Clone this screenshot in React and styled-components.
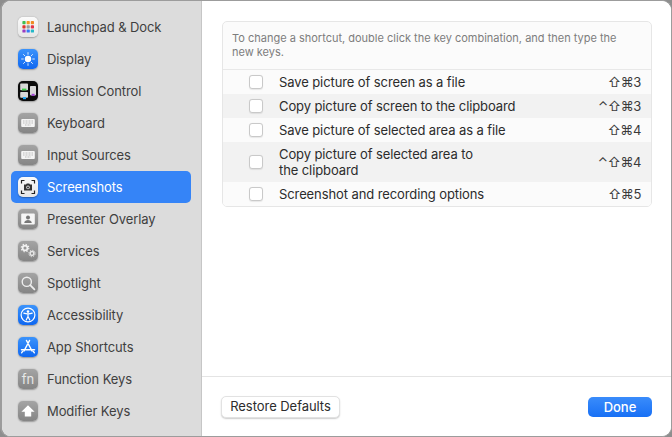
import React from "react";
import styled, { createGlobalStyle } from "styled-components";

const GlobalStyle = createGlobalStyle`
  html, body { margin: 0; padding: 0; background: #8e8e8e; }
  body { font-family: "Inter", "Liberation Sans", sans-serif; -webkit-font-smoothing: antialiased; }
  * { box-sizing: border-box; }
`;

const Grid = () => (
  <svg viewBox="0 0 20 20" width="20" height="20">
    {[
      ["#3fbf52", "#f59a23", "#f08a24"],
      ["#e0352f", "#9a9a9a", "#e2344a"],
      ["#9a3cc0", "#3478f6", "#22b8c8"],
    ].map((row, y) =>
      row.map((fill, x) => (
        <rect key={`${x}-${y}`} x={4.4 + x * 4.2} y={4 + y * 4.2} width="3.2" height="3.2" rx="0.7" fill={fill} />
      ))
    )}
  </svg>
);

const Sun = () => (
  <svg viewBox="0 0 20 20" width="20" height="20">
    <circle cx="10" cy="10" r="3.2" fill="#fff" />
    <g stroke="#fff" strokeWidth="1" strokeLinecap="round" opacity="0.85">
      <path d="M10 3.6v1.7M10 14.7v1.7M3.6 10h1.7M14.7 10h1.7M5.5 5.5l1.2 1.2M13.3 13.3l1.2 1.2M5.5 14.5l1.2-1.2M13.3 6.7l1.2-1.2" />
    </g>
  </svg>
);

const Mission = () => (
  <svg viewBox="0 0 20 20" width="20" height="20">
    <rect x="2.2" y="2.6" width="7.8" height="6.6" rx="0.8" fill="#d8d8d8" />
    <rect x="4" y="7.6" width="4.4" height="1.8" fill="#3ed14a" />
    <rect x="12" y="5" width="6" height="9.4" rx="0.8" fill="#d8d8d8" />
    <rect x="13.6" y="12.8" width="3" height="2" fill="#a545d8" />
    <rect x="2.2" y="11" width="7.8" height="5.8" rx="0.8" fill="#d8d8d8" />
    <rect x="5" y="16" width="3" height="2.2" fill="#25a7f5" />
  </svg>
);

const Keys = () => (
  <svg viewBox="0 0 20 20" width="20" height="20">
    <rect x="3.2" y="6" width="13.6" height="8" rx="1" fill="#f4f4f4" />
    <path d="M5 8h10M5 10h10M7 12h6" stroke="#b5b5b5" strokeWidth="0.9" strokeDasharray="1 0.5" />
  </svg>
);

const Capture = () => (
  <svg viewBox="0 0 20 20" width="20" height="20">
    <path d="M3.5 6.5v-3h3M13.5 3.5h3v3M16.5 13.5v3h-3M6.5 16.5h-3v-3" fill="none" stroke="#222" strokeWidth="1.2" />
    <path d="M6 7.5h2l.8-1h2.4l.8 1h2v6H6z" fill="#333" />
    <circle cx="10" cy="10.4" r="1.8" fill="#ddd" />
    <circle cx="10" cy="10.4" r="1" fill="#333" />
  </svg>
);

const Presenter = () => (
  <svg viewBox="0 0 20 20" width="20" height="20">
    <rect x="3.2" y="4.5" width="13.6" height="11" rx="1" fill="#f6f6f6" />
    <circle cx="10" cy="8.6" r="2" fill="#777" />
    <path d="M6.2 14c.4-2.2 2-3 3.8-3s3.4.8 3.8 3z" fill="#777" />
  </svg>
);

const Gears = () => (
  <svg viewBox="0 0 20 20" width="20" height="20">
    <circle cx="7" cy="7" r="2.4" fill="none" stroke="#f2f2f2" strokeWidth="1.7" />
    <circle cx="7" cy="7" r="3.8" fill="none" stroke="#f2f2f2" strokeWidth="1.1" strokeDasharray="1.4 1.6" />
    <circle cx="14" cy="12.5" r="1.9" fill="none" stroke="#e6e6e6" strokeWidth="1.5" />
    <circle cx="14" cy="12.5" r="3.2" fill="none" stroke="#e6e6e6" strokeWidth="1" strokeDasharray="1.2 1.3" />
  </svg>
);

const Magnifier = () => (
  <svg viewBox="0 0 20 20" width="20" height="20">
    <circle cx="8.8" cy="8.8" r="4.6" fill="none" stroke="#eee" strokeWidth="1.4" />
    <path d="M12.2 12.2l4.2 4.2" stroke="#eee" strokeWidth="1.8" strokeLinecap="round" />
  </svg>
);

const Person = () => (
  <svg viewBox="0 0 20 20" width="20" height="20">
    <circle cx="10" cy="10" r="6.9" fill="none" stroke="#fff" strokeWidth="1.2" />
    <circle cx="10" cy="6.6" r="1.3" fill="#fff" />
    <path d="M5.8 8.2c2.8.8 5.6.8 8.4 0M10 9v2.8M10 11.5l-1.8 3.6M10 11.5l1.8 3.6" fill="none" stroke="#fff" strokeWidth="1.2" strokeLinecap="round" />
  </svg>
);

const Store = () => (
  <svg viewBox="0 0 20 20" width="20" height="20">
    <path d="M11.5 3.5L6 14M8.5 3.5L14 14M3.5 12.8h13" fill="none" stroke="#fff" strokeWidth="1.5" strokeLinecap="round" />
    <path d="M3.6 15.8l1-1.4M16.4 15.8l-1-1.4" stroke="#fff" strokeWidth="1.4" strokeLinecap="round" />
  </svg>
);

const ShiftArrow = () => (
  <svg viewBox="0 0 20 20" width="20" height="20">
    <path d="M10 4.2l6.6 6.6h-3.4v4.6H6.8v-4.6H3.4z" fill="#fff" />
  </svg>
);

const sidebarItems = [
  { label: "Launchpad & Dock", tone: "white", icon: <Grid /> },
  { label: "Display", tone: "blue", icon: <Sun /> },
  { label: "Mission Control", tone: "black", icon: <Mission /> },
  { label: "Keyboard", tone: "gray", icon: <Keys /> },
  { label: "Input Sources", tone: "gray", icon: <Keys /> },
  { label: "Screenshots", tone: "white", icon: <Capture />, active: true },
  { label: "Presenter Overlay", tone: "gray", icon: <Presenter /> },
  { label: "Services", tone: "gray", icon: <Gears /> },
  { label: "Spotlight", tone: "gray", icon: <Magnifier /> },
  { label: "Accessibility", tone: "blue", icon: <Person /> },
  { label: "App Shortcuts", tone: "blue", icon: <Store /> },
  { label: "Function Keys", tone: "gray", icon: <FnLabel>fn</FnLabel> },
  { label: "Modifier Keys", tone: "gray", icon: <ShiftArrow /> },
];

const rows = [
  { label: "Save picture of screen as a file", keys: "⇧⌘3" },
  { label: "Copy picture of screen to the clipboard", keys: "⌃⇧⌘3" },
  { label: "Save picture of selected area as a file", keys: "⇧⌘4" },
  { label: "Copy picture of selected area to the clipboard", keys: "⌃⇧⌘4", tall: true },
  { label: "Screenshot and recording options", keys: "⇧⌘5" },
];

export default function App() {
  return (
    <>
      <GlobalStyle />
      <Window>
        <Sidebar>
          {sidebarItems.map((item) => (
            <SideItem key={item.label} $active={item.active}>
              <IconTile $tone={item.tone}>{item.icon}</IconTile>
              {item.label}
            </SideItem>
          ))}
        </Sidebar>
        <Main>
          <Content>
            <Panel>
              <Hint>To change a shortcut, double click the key combination, and then type the new keys.</Hint>
              {rows.map((row, i) => (
                <Row key={row.label} $striped={i % 2 === 1} $tall={row.tall}>
                  <Check />
                  <RowLabel $tall={row.tall}>{row.label}</RowLabel>
                  <Shortcut>{row.keys}</Shortcut>
                </Row>
              ))}
            </Panel>
          </Content>
          <Footer>
            <RestoreButton>Restore Defaults</RestoreButton>
            <DoneButton>Done</DoneButton>
          </Footer>
        </Main>
      </Window>
    </>
  );
}

function FnLabel({ children }) {
  return <FnText>{children}</FnText>;
}

const FnText = styled.span`
  font-size: 13px;
  color: #e8e8e8;
`;

const Window = styled.div`
  width: 672px;
  height: 437px;
  display: flex;
  overflow: hidden;
  border: 1px solid #9c9c9c;
  border-left-width: 2px;
  border-radius: 10px;
  background: #fff;
`;

const Sidebar = styled.nav`
  width: 200px;
  flex: none;
  padding: 10px 10px 0 9px;
  background: #dcdcdc;
  border-right: 1px solid #c6c6c6;
  display: flex;
  flex-direction: column;
`;

const SideItem = styled.div`
  height: 32px;
  display: flex;
  align-items: center;
  gap: 9px;
  padding-left: 7px;
  border-radius: 5px;
  font-size: 13px;
  letter-spacing: -0.1px;
  color: ${(p) => (p.$active ? "#fff" : "#3f3f3f")};
  background: ${(p) => (p.$active ? "#3584f7" : "transparent")};
`;

const tones = {
  white: "linear-gradient(#fbfbfb, #e6e6e6)",
  blue: "linear-gradient(#3b93fb, #0f67f0)",
  black: "#0c0c0c",
  gray: "linear-gradient(#a4a4a4, #858585)",
};

const IconTile = styled.span`
  width: 20px;
  height: 20px;
  flex: none;
  display: flex;
  align-items: center;
  justify-content: center;
  border-radius: 5px;
  background: ${(p) => tones[p.$tone]};
  box-shadow: 0 0.5px 1.5px rgba(0, 0, 0, 0.3);
`;

const Main = styled.main`
  flex: 1;
  display: flex;
  flex-direction: column;
  background: #fff;
`;

const Content = styled.div`
  flex: 1;
  padding: 20px 19px 0 20px;
`;

const Panel = styled.section`
  border: 1px solid #e6e6e6;
  border-radius: 5px;
  background: #fbfbfb;
  overflow: hidden;
`;

const Hint = styled.p`
  margin: 0;
  height: 48px;
  padding: 9px 22px 0 9px;
  font-size: 11px;
  line-height: 14px;
  color: #7d7d7d;
  border-bottom: 1px solid #e8e8e8;
`;

const Row = styled.div`
  height: ${(p) => (p.$tall ? "40px" : "24px")};
  display: flex;
  align-items: center;
  padding: 0 10px 0 26px;
  background: ${(p) => (p.$striped ? "#f2f2f2" : "#fbfbfb")};
`;

const Check = styled.span`
  width: 14px;
  height: 14px;
  flex: none;
  margin-right: 16px;
  border: 1px solid #c9c9c9;
  border-radius: 3px;
  background: #fff;
  box-shadow: 0 0.5px 1px rgba(0, 0, 0, 0.08);
`;

const RowLabel = styled.span`
  flex: 1;
  max-width: ${(p) => (p.$tall ? "215px" : "none")};
  font-size: 13px;
  line-height: 16px;
  letter-spacing: -0.1px;
  color: #2c2c2c;
`;

const Shortcut = styled.span`
  margin-left: auto;
  font-family: "Inter", "DejaVu Sans", sans-serif;
  font-size: 13px;
  letter-spacing: -0.4px;
  color: #3a3a3a;
`;

const Footer = styled.footer`
  height: 60px;
  flex: none;
  display: flex;
  align-items: center;
  justify-content: space-between;
  padding: 0 19px;
  border-top: 1px solid #e4e4e4;
`;

const RestoreButton = styled.button`
  width: 119px;
  height: 22px;
  padding: 0 0 1px;
  font: inherit;
  font-size: 13px;
  letter-spacing: -0.05px;
  color: #2c2c2c;
  background: #fff;
  border: 1px solid #e2e2e2;
  border-radius: 5px;
  box-shadow: 0 1px 1.5px rgba(0, 0, 0, 0.2);
`;

const DoneButton = styled.button`
  width: 64px;
  height: 20px;
  padding: 0;
  font: inherit;
  font-size: 13px;
  font-weight: 500;
  color: #fff;
  background: linear-gradient(#3a8cfb, #1870f5);
  border: none;
  border-radius: 5px;
`;
